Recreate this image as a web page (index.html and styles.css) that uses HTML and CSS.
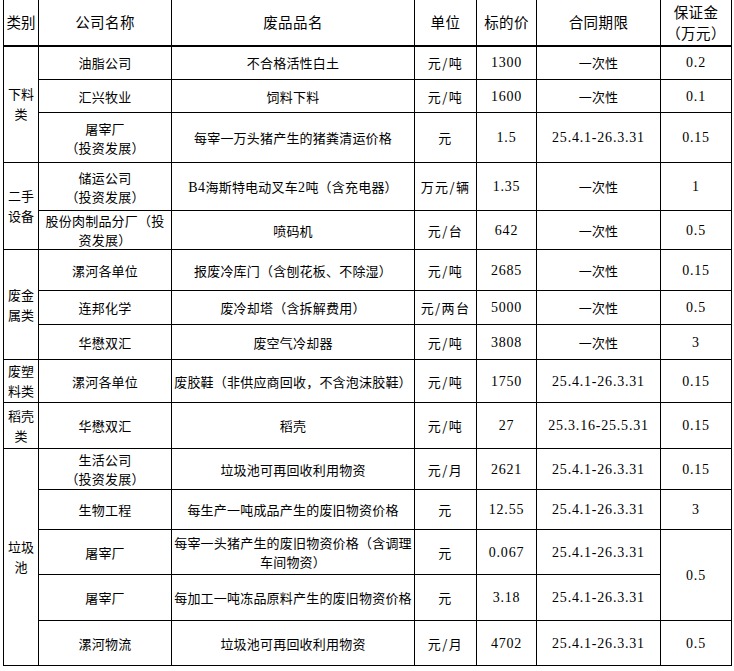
FILE: index.html
```html
<!DOCTYPE html>
<html lang="zh-CN">
<head>
<meta charset="utf-8">
<title>废品处置清单</title>
<link rel="stylesheet" href="styles.css">
</head>
<body>
<table class="sheet">
  <colgroup>
    <col class="c-cat"><col class="c-co"><col class="c-item"><col class="c-unit"><col class="c-price"><col class="c-term"><col class="c-dep">
  </colgroup>
  <thead>
    <tr class="head">
      <th class="cat">类别</th><th>公司名称</th><th>废品品名</th><th>单位</th><th>标的价</th><th>合同期限</th><th>保证金<br>（万元）</th>
    </tr>
  </thead>
  <tbody>
    <tr class="h34">
      <td rowspan="3" class="cat">下料<br>类</td>
      <td>油脂公司</td><td>不合格活性白土</td><td class="unit">元/吨</td><td class="num">1300</td><td>一次性</td><td class="num">0.2</td>
    </tr>
    <tr class="h33">
      <td>汇兴牧业</td><td>饲料下料</td><td class="unit">元/吨</td><td class="num">1600</td><td>一次性</td><td class="num">0.1</td>
    </tr>
    <tr class="h50">
      <td>屠宰厂<br>（投资发展）</td><td class="nowrap">每宰一万头猪产生的猪粪清运价格</td><td class="unit">元</td><td class="num">1.5</td><td class="num">25.4.1-26.3.31</td><td class="num">0.15</td>
    </tr>
    <tr class="h48">
      <td rowspan="2" class="cat">二手<br>设备</td>
      <td>储运公司<br>（投资发展）</td><td class="nowrap"><span class="lat">B4</span>海斯特电动叉车<span class="lat">2</span>吨（含充电器）</td><td class="unit">万元/辆</td><td class="num">1.35</td><td>一次性</td><td class="num">1</td>
    </tr>
    <tr class="h39">
      <td>股份肉制品分厂（投<br>资发展）</td><td>喷码机</td><td class="unit">元/台</td><td class="num">642</td><td>一次性</td><td class="num">0.5</td>
    </tr>
    <tr class="h41">
      <td rowspan="3" class="cat">废金<br>属类</td>
      <td>漯河各单位</td><td class="nowrap">报废冷库门（含刨花板、不除湿）</td><td class="unit">元/吨</td><td class="num">2685</td><td>一次性</td><td class="num">0.15</td>
    </tr>
    <tr class="h34">
      <td>连邦化学</td><td>废冷却塔（含拆解费用）</td><td class="unit">元/两台</td><td class="num">5000</td><td>一次性</td><td class="num">0.5</td>
    </tr>
    <tr class="h35">
      <td>华懋双汇</td><td>废空气冷却器</td><td class="unit">元/吨</td><td class="num">3808</td><td>一次性</td><td class="num">3</td>
    </tr>
    <tr class="h43">
      <td class="cat">废塑<br>料类</td>
      <td>漯河各单位</td><td class="nowrap">废胶鞋（非供应商回收，不含泡沫胶鞋）</td><td class="unit">元/吨</td><td class="num">1750</td><td class="num">25.4.1-26.3.31</td><td class="num">0.15</td>
    </tr>
    <tr class="h46">
      <td class="cat">稻壳<br>类</td>
      <td>华懋双汇</td><td>稻壳</td><td class="unit">元/吨</td><td class="num">27</td><td class="num">25.3.16-25.5.31</td><td class="num">0.15</td>
    </tr>
    <tr class="h41">
      <td rowspan="5" class="cat">垃圾<br>池</td>
      <td>生活公司<br>（投资发展）</td><td>垃圾池可再回收利用物资</td><td class="unit">元/月</td><td class="num">2621</td><td class="num">25.4.1-26.3.31</td><td class="num">0.15</td>
    </tr>
    <tr class="h40">
      <td>生物工程</td><td class="nowrap">每生产一吨成品产生的废旧物资价格</td><td class="unit">元</td><td class="num">12.55</td><td class="num">25.4.1-26.3.31</td><td class="num">3</td>
    </tr>
    <tr class="h45">
      <td>屠宰厂</td><td class="nowrap">每宰一头猪产生的废旧物资价格（含调理<br>车间物资）</td><td class="unit">元</td><td class="num">0.067</td><td class="num">25.4.1-26.3.31</td><td rowspan="2" class="num">0.5</td>
    </tr>
    <tr class="h46">
      <td>屠宰厂</td><td class="nowrap">每加工一吨冻品原料产生的废旧物资价格</td><td class="unit">元</td><td class="num">3.18</td><td class="num">25.4.1-26.3.31</td>
    </tr>
    <tr class="h45">
      <td>漯河物流</td><td>垃圾池可再回收利用物资</td><td class="unit">元/月</td><td class="num">4702</td><td class="num">25.4.1-26.3.31</td><td class="num">0.5</td>
    </tr>
  </tbody>
</table>
</body>
</html>
```

FILE: styles.css
```css
html, body {
  margin: 0;
  padding: 0;
  background: #ffffff;
}

body {
  color: #000;
  font-family: "Liberation Serif", "Noto Sans CJK SC", serif;
}

.sheet {
  margin: -2px 0 0 3px;
  width: 728px;
  table-layout: fixed;
  border-collapse: collapse;
}

.c-cat { width: 35px; }
.c-co { width: 133px; }
.c-item { width: 243px; }
.c-unit { width: 62px; }
.c-price { width: 60px; }
.c-term { width: 124px; }
.c-dep { width: 71px; }

.sheet th,
.sheet td {
  border: 1px solid #000;
  padding: 0 3px;
  text-align: center;
  vertical-align: middle;
  font-family: "Noto Sans CJK SC", sans-serif;
  font-weight: 400;
  font-size: 13px;
  line-height: 19px;
  letter-spacing: 0.2px;
  color: #000;
}

.sheet th {
  font-size: 14.5px;
  line-height: 21px;
  letter-spacing: 0.4px;
  border-bottom: 2px solid #000;
}

.head { height: 47px; }

.sheet th.cat,
.sheet td.cat {
  padding: 0;
  letter-spacing: 0;
  white-space: nowrap;
}

.sheet td.cat {
  line-height: 20px;
}

.sheet td.num {
  font-family: "Liberation Serif", serif;
  font-size: 14px;
  letter-spacing: 0.8px;
  padding: 0;
}

.sheet td.unit {
  letter-spacing: 1.4px;
  padding: 0;
}

.lat {
  font-family: "Liberation Serif", serif;
  font-size: 14px;
  letter-spacing: 0.5px;
}

.sheet td.nowrap {
  white-space: nowrap;
  padding: 0 1px;
}

.h33 { height: 33px; }
.h34 { height: 34px; }
.h35 { height: 35px; }
.h39 { height: 39px; }
.h40 { height: 40px; }
.h41 { height: 41px; }
.h43 { height: 43px; }
.h45 { height: 45px; }
.h46 { height: 46px; }
.h48 { height: 48px; }
.h50 { height: 50px; }
```
